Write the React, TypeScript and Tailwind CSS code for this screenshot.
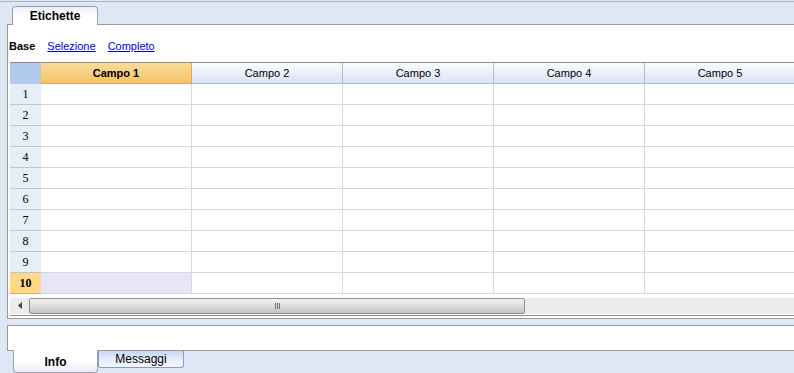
import React from "react";

const cols = ["Campo 1", "Campo 2", "Campo 3", "Campo 4", "Campo 5"];
const rows = [1, 2, 3, 4, 5, 6, 7, 8, 9, 10];

export default function App() {
  return (
    <div className="w-[794px] h-[373px] overflow-hidden bg-[#dde8f4] flex flex-col font-['Liberation_Sans',sans-serif] text-[11px] text-black">
      {/* top tab strip */}
      <div className="mt-px h-[23px] border-t border-[#a9b3c2] pl-[12px] flex items-end">
        <div className="relative z-10 -mb-px w-[86px] h-[19px] rounded-t-[4px] border border-b-0 border-[#a0a0a0] bg-gradient-to-b from-[#e8effc] via-white to-white flex items-center justify-center pt-px font-bold text-[12px]">
          Etichette
        </div>
      </div>

      {/* main panel */}
      <div className="ml-[7px] h-[296px] border-l border-t border-b border-[#9a9a9a] bg-white flex flex-col">
        <div className="h-[37px] pl-px flex items-center gap-[12px] pt-[6px]">
          <span className="font-bold">Base</span>
          <span className="text-[#0000e0] underline">Selezione</span>
          <span className="text-[#0000e0] underline">Completo</span>
        </div>

        <div className="ml-[2px] flex flex-col">
          {/* header */}
          <div className="flex h-[22px] border-t border-[#8c8c8c]">
            <div className="w-[31px] shrink-0 bg-[#b1c9ec] border-b border-[#b1c9ec]" />
            {cols.map((c, i) =>
              i === 0 ? (
                <div
                  key={c}
                  className="w-[151px] shrink-0 bg-gradient-to-b from-[#fadc9c] to-[#f5c366] border-b border-r border-[#f0a23c] flex items-center justify-center font-bold"
                >
                  {c}
                </div>
              ) : (
                <div
                  key={c}
                  className="w-[151px] shrink-0 bg-gradient-to-b from-[#fbfcff] to-[#dce2f2] border-b border-r border-[#a7bfd6] flex items-center justify-center"
                >
                  {c}
                </div>
              )
            )}
          </div>

          {/* rows */}
          {rows.map((r) => {
            const sel = r === 10;
            return (
              <div key={r} className="flex h-[21px]">
                <div
                  className={
                    sel
                      ? "w-[31px] shrink-0 bg-[#ffd889] border-b border-[#f0a23c] flex items-center justify-center font-['Liberation_Serif',serif] text-[12px] font-bold"
                      : "w-[31px] shrink-0 bg-[#e6eef8] border-b border-[#b4c8dc] flex items-center justify-center font-['Liberation_Serif',serif] text-[12px]"
                  }
                >
                  {r}
                </div>
                {cols.map((c, i) => (
                  <div
                    key={c}
                    className={
                      sel && i === 0
                        ? "w-[151px] shrink-0 bg-[#e6e6f7] border-b border-r border-[#d8d8d8]"
                        : "w-[151px] shrink-0 border-b border-r border-[#d8d8d8]"
                    }
                  />
                ))}
              </div>
            );
          })}

          {/* horizontal scrollbar */}
          <div className="h-[22px] pt-[4px] border-b border-[#8c8c8c] flex">
            <div className="w-[19px] h-[16px] bg-[#ececec] flex items-center justify-center">
              <svg width="4" height="7" viewBox="0 0 4 7">
                <path d="M4 0 L0 3.5 L4 7 Z" fill="#404040" />
              </svg>
            </div>
            <div className="w-[496px] h-[16px] rounded-[2px] border border-[#8e8e8e] bg-gradient-to-b from-[#f4f4f4] via-[#dcdcdc] to-[#c4c4c4] flex items-center justify-center">
              <div className="flex gap-[1px]">
                <div className="w-px h-[6px] bg-[#707070]" />
                <div className="w-px h-[6px] bg-[#707070]" />
                <div className="w-px h-[6px] bg-[#707070]" />
              </div>
            </div>
            <div className="flex-1 h-[16px] bg-[#ececec]" />
          </div>
        </div>
      </div>

      {/* bottom panel */}
      <div className="mt-[6px] ml-[7px] h-[26px] border-l border-t border-b border-[#9a9a9a] bg-white" />
      <div className="pl-[13px] flex items-start">
        <div className="-mt-px w-[85px] h-[23px] rounded-b-[4px] border border-t-0 border-[#a0a0a0] bg-gradient-to-b from-white via-white to-[#e8effc] flex items-center justify-center pt-[2px] font-bold text-[12px]">
          Info
        </div>
        <div className="w-[86px] h-[17px] rounded-b-[3px] border border-t-0 border-[#8c9cb4] bg-gradient-to-b from-[#c6d8f6] via-[#e4ecfc] to-[#f4f7fe] flex items-center justify-center text-[12px]">
          Messaggi
        </div>
      </div>
    </div>
  );
}
